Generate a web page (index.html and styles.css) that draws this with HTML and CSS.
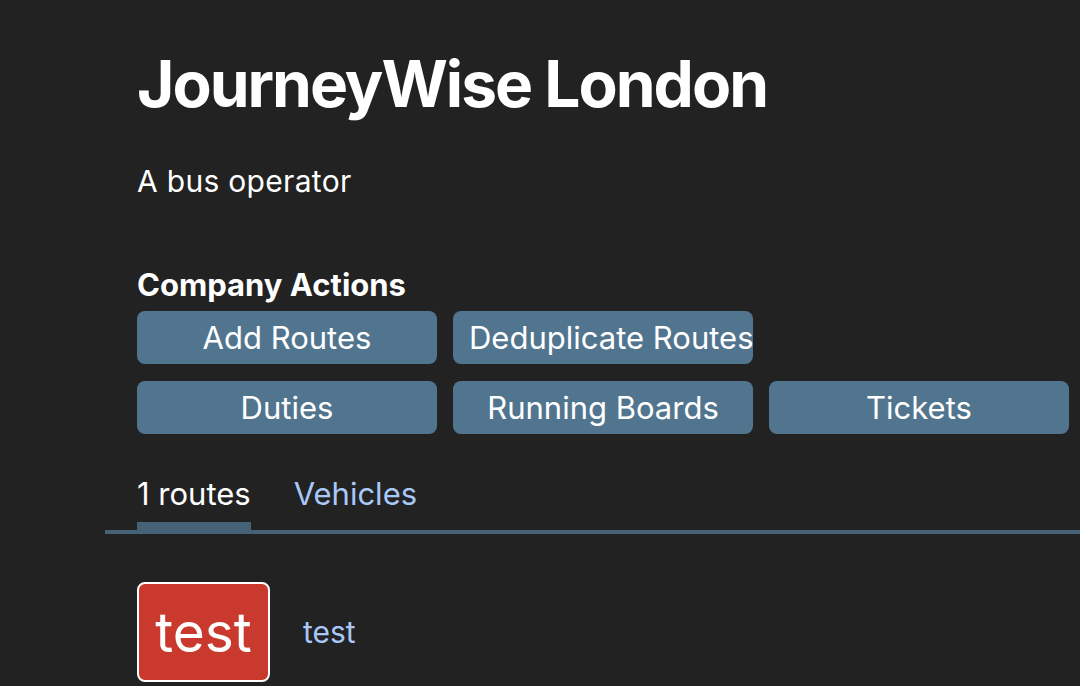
FILE: index.html
```html
<!DOCTYPE html>
<html>
<head>
<meta charset="utf-8">
<link rel="stylesheet" href="styles.css">
</head>
<body>
<div class="page">
  <div class="head">
    <h1 class="title">JourneyWise London</h1>
    <p class="subtitle">A bus operator</p>
    <h3 class="section">Company Actions</h3>
    <div class="actions">
      <div class="action-row">
        <button class="btn">Add Routes</button>
        <button class="btn">Deduplicate Routes</button>
      </div>
      <div class="action-row">
        <button class="btn">Duties</button>
        <button class="btn">Running Boards</button>
        <button class="btn">Tickets</button>
      </div>
    </div>
  </div>
  <div class="tabs">
    <span class="tab active">1 routes</span>
    <span class="tab link">Vehicles</span>
  </div>
  <div class="routes">
    <div class="route">
      <div class="badge">test</div>
      <span class="route-name">test</span>
    </div>
  </div>
</div>
</body>
</html>
```

FILE: styles.css
```css
html, body {
  margin: 0;
  padding: 0;
  background: #222222;
  color: #ffffff;
  font-family: Inter, "Noto Sans", sans-serif;
  overflow: hidden;
}
.page {
  margin-left: 105px;
}
.head {
  padding-left: 32px;
}
.title {
  margin: 0;
  padding-top: 46px;
  font-size: 64px;
  font-weight: 700;
  line-height: 76px;
  letter-spacing: -2px;
}
.subtitle {
  margin: 0;
  padding-top: 39px;
  font-size: 30px;
  line-height: 40px;
  letter-spacing: 0.3px;
}
.section {
  margin: 0;
  padding-top: 66px;
  font-size: 31px;
  font-weight: 700;
  line-height: 36px;
}
.actions {
  display: flex;
  flex-direction: column;
  gap: 17px;
  margin-top: 8px;
}
.action-row {
  display: flex;
  gap: 16px;
}
.btn {
  width: 300px;
  height: 53px;
  border: none;
  border-radius: 8px;
  background: #52758f;
  color: #ffffff;
  font-family: Inter, "Noto Sans", sans-serif;
  font-size: 31px;
  padding: 0 16px;
  white-space: nowrap;
  overflow: hidden;
}
.tabs {
  display: flex;
  gap: 43px;
  padding-left: 32px;
  margin-top: 38px;
  border-bottom: 4px solid #456277;
}
.tab {
  font-size: 31px;
  line-height: 40px;
  padding-top: 2px;
  padding-bottom: 8px;
  border-bottom: 8px solid transparent;
}
.tab.active {
  border-bottom-color: #456277;
}
.tab.link {
  color: #a8c8f8;
}
.routes {
  padding-left: 32px;
  padding-top: 48px;
}
.route {
  display: flex;
  align-items: center;
  gap: 33px;
}
.badge {
  width: 129px;
  height: 96px;
  background: #c9392d;
  border: 2px solid #ffffff;
  border-radius: 8px;
  display: flex;
  align-items: center;
  justify-content: center;
  font-size: 55px;
}
.route-name {
  font-size: 30px;
  color: #a8c8f8;
}
```
